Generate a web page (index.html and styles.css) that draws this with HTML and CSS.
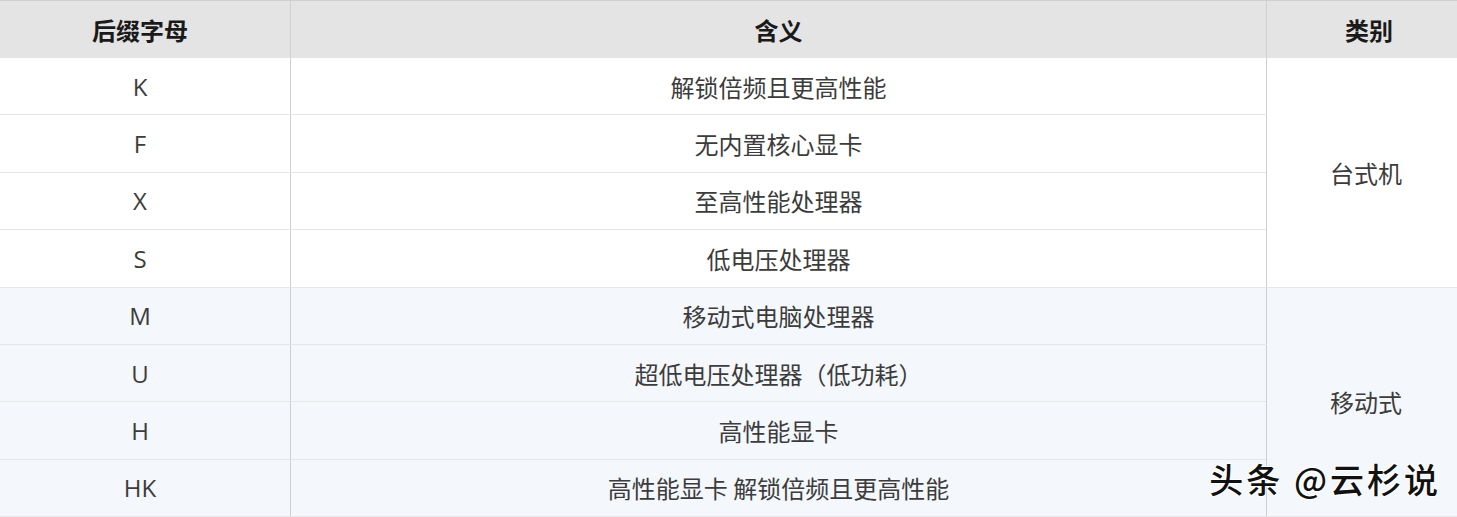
FILE: index.html
```html
<!DOCTYPE html>
<html lang="zh">
<head>
<meta charset="utf-8">
<link rel="stylesheet" href="styles.css">
</head>
<body>
<div class="wrap">
<table class="suffix">
  <thead>
    <tr><th class="c1">后缀字母</th><th class="c2">含义</th><th class="c3">类别</th></tr>
  </thead>
  <tbody>
    <tr><td>K</td><td>解锁倍频且更高性能</td><td class="cat" rowspan="4">台式机</td></tr>
    <tr><td>F</td><td>无内置核心显卡</td></tr>
    <tr><td>X</td><td>至高性能处理器</td></tr>
    <tr><td>S</td><td>低电压处理器</td></tr>
    <tr class="mob"><td>M</td><td>移动式电脑处理器</td><td class="cat" rowspan="4">移动式</td></tr>
    <tr class="mob"><td>U</td><td>超低电压处理器（低功耗）</td></tr>
    <tr class="mob"><td>H</td><td>高性能显卡</td></tr>
    <tr class="mob"><td>HK</td><td>高性能显卡 解锁倍频且更高性能</td></tr>
  </tbody>
</table>
<div class="mark">头条 @云杉说</div>
</div>
</body>
</html>
```

FILE: styles.css
```css
html, body {
  margin: 0;
  padding: 0;
  background: #fff;
}
.wrap {
  position: relative;
  width: 1457px;
  height: 517px;
  overflow: hidden;
}
.suffix {
  width: 1457px;
  border-collapse: collapse;
  table-layout: fixed;
  font-family: "Noto Sans CJK SC", "Open Sans", sans-serif;
  font-size: 24px;
  color: #3c3c3c;
}
.suffix th {
  height: 57px;
  background: #e4e4e4;
  color: #1a1a1a;
  font-weight: bold;
  border-top: 1px solid #cfcfcf;
  border-left: 1px solid #d2d2d2;
  padding: 0;
}
.suffix th.c1 { border-left: none; padding-right: 10px; width: 280px; }
.suffix th.c3 { padding-left: 14px; width: 176px; }
.suffix td {
  height: 56.4px;
  padding: 0;
  text-align: center;
  vertical-align: middle;
  border-bottom: 1px solid #e6e6e6;
  border-left: 1px solid #cfcfcf;
}
.suffix td:first-child {
  border-left: none;
  padding-right: 10px;
  font-family: "Open Sans", "Noto Sans CJK SC", sans-serif;
}
.suffix td.cat { border-left: 1px solid #cfcfcf; padding-left: 8px; }
.mob td { background: #f4f7fc; }
.mark {
  position: absolute;
  right: 16px;
  bottom: 14px;
  font-family: "Noto Sans CJK SC", sans-serif;
  font-size: 34px;
  font-weight: 500;
  letter-spacing: 3px;
  color: #111;
  text-shadow: 1px 1px 0 #fff, -1px -1px 0 #fff, 1px -1px 0 #fff, -1px 1px 0 #fff;
}
```
